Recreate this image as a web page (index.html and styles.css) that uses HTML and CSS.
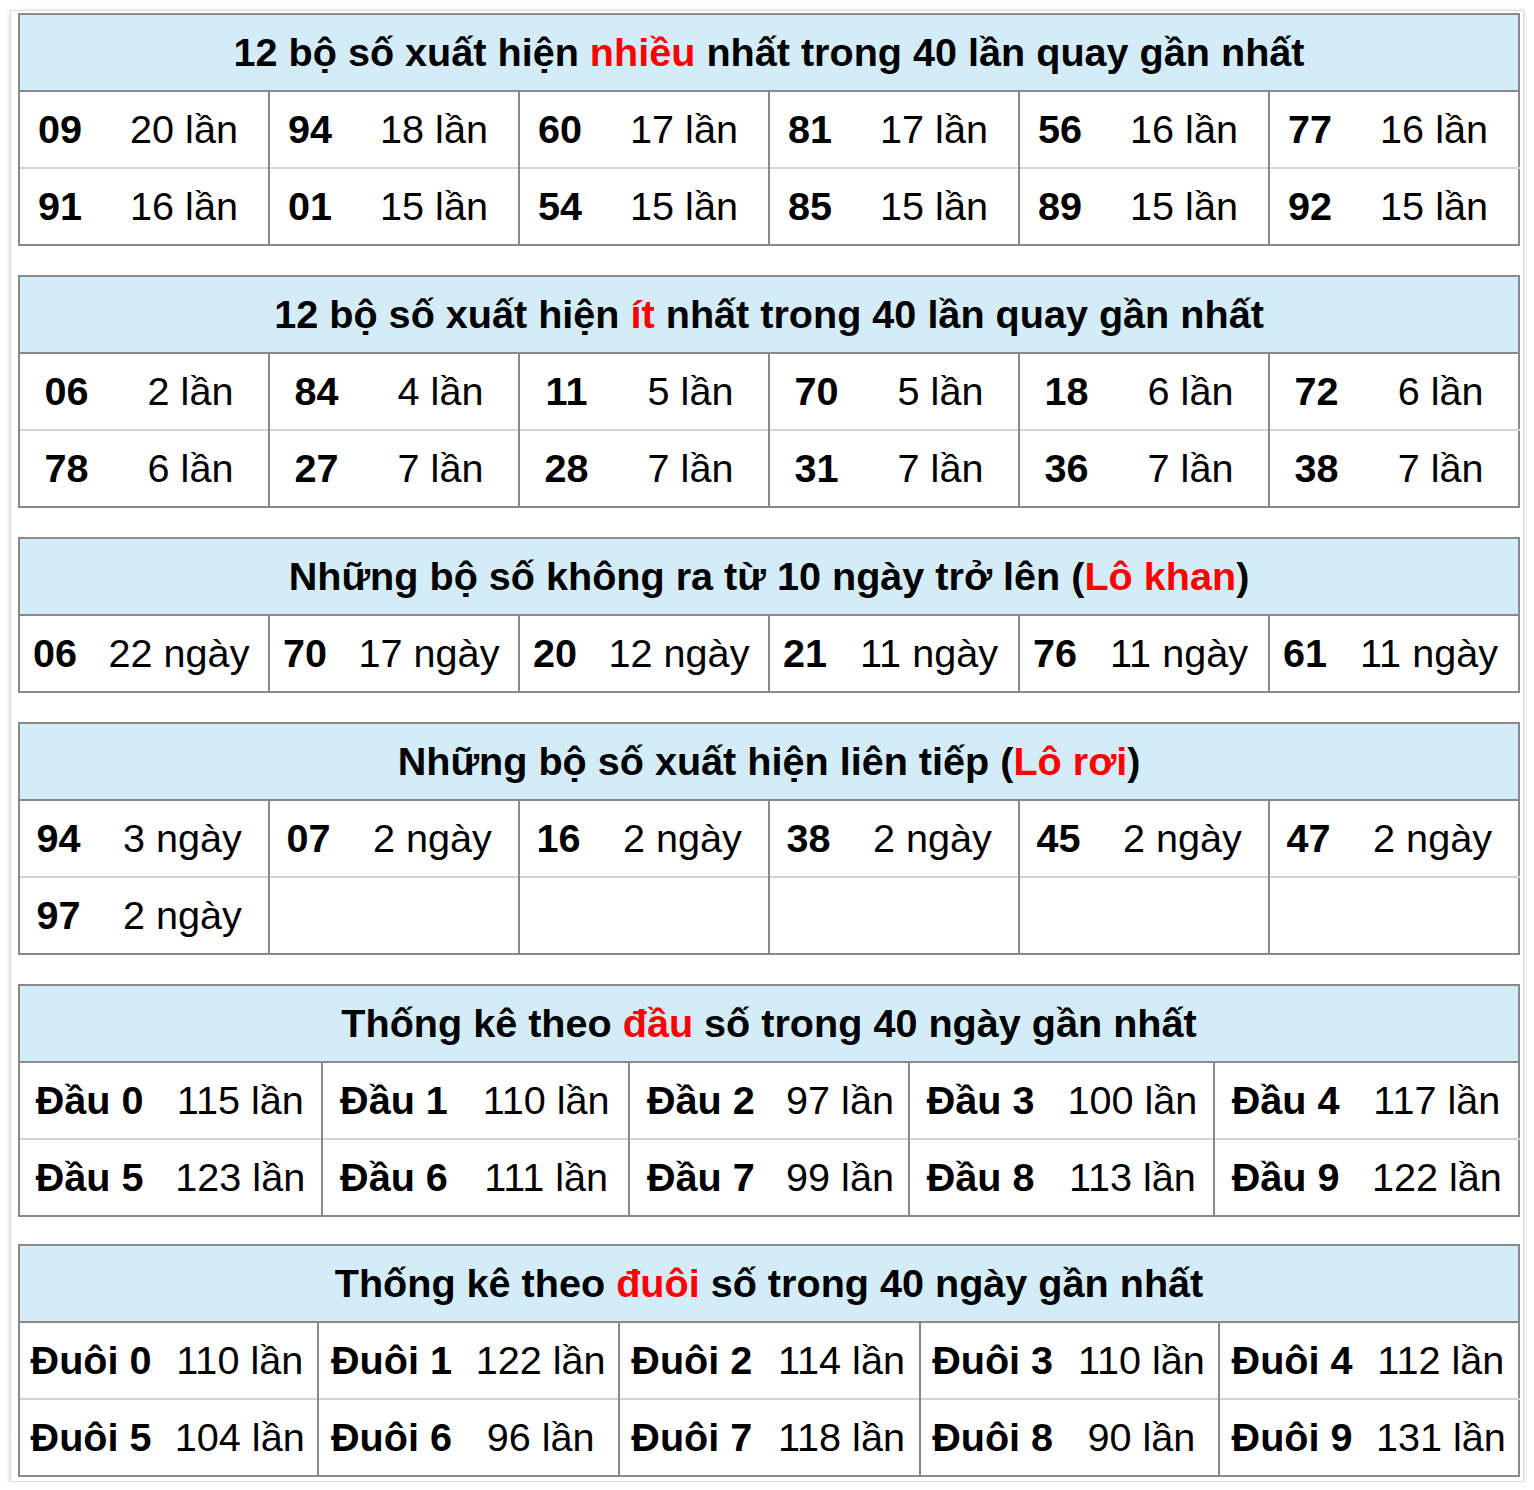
FILE: index.html
```html
<!DOCTYPE html>
<html lang="vi">
<head>
<meta charset="utf-8">
<title>Thống kê lô tô</title>
<link rel="stylesheet" href="styles.css">
</head>
<body>
<div class="card">

<table class="stat">
  <colgroup>
    <col class="w81"><col class="w169"><col class="w81"><col class="w169"><col class="w81"><col class="w169">
    <col class="w81"><col class="w169"><col class="w81"><col class="w169"><col class="w81"><col class="w169">
  </colgroup>
  <tr><th colspan="12">12 bộ số xuất hiện <span class="red">nhiều</span> nhất trong 40 lần quay gần nhất</th></tr>
  <tr>
    <td class="n">09</td><td>20 lần</td>
    <td class="n">94</td><td>18 lần</td>
    <td class="n">60</td><td>17 lần</td>
    <td class="n">81</td><td>17 lần</td>
    <td class="n">56</td><td>16 lần</td>
    <td class="n">77</td><td>16 lần</td>
  </tr>
  <tr>
    <td class="n">91</td><td>16 lần</td>
    <td class="n">01</td><td>15 lần</td>
    <td class="n">54</td><td>15 lần</td>
    <td class="n">85</td><td>15 lần</td>
    <td class="n">89</td><td>15 lần</td>
    <td class="n">92</td><td>15 lần</td>
  </tr>
</table>

<table class="stat">
  <colgroup>
    <col class="w94"><col class="w156"><col class="w94"><col class="w156"><col class="w94"><col class="w156">
    <col class="w94"><col class="w156"><col class="w94"><col class="w156"><col class="w94"><col class="w156">
  </colgroup>
  <tr><th colspan="12">12 bộ số xuất hiện <span class="red">ít</span> nhất trong 40 lần quay gần nhất</th></tr>
  <tr>
    <td class="n">06</td><td>2 lần</td>
    <td class="n">84</td><td>4 lần</td>
    <td class="n">11</td><td>5 lần</td>
    <td class="n">70</td><td>5 lần</td>
    <td class="n">18</td><td>6 lần</td>
    <td class="n">72</td><td>6 lần</td>
  </tr>
  <tr>
    <td class="n">78</td><td>6 lần</td>
    <td class="n">27</td><td>7 lần</td>
    <td class="n">28</td><td>7 lần</td>
    <td class="n">31</td><td>7 lần</td>
    <td class="n">36</td><td>7 lần</td>
    <td class="n">38</td><td>7 lần</td>
  </tr>
</table>

<table class="stat">
  <colgroup>
    <col class="w71"><col class="w179"><col class="w71"><col class="w179"><col class="w71"><col class="w179">
    <col class="w71"><col class="w179"><col class="w71"><col class="w179"><col class="w71"><col class="w179">
  </colgroup>
  <tr><th colspan="12">Những bộ số không ra từ 10 ngày trở lên (<span class="red">Lô khan</span>)</th></tr>
  <tr>
    <td class="n">06</td><td>22 ngày</td>
    <td class="n">70</td><td>17 ngày</td>
    <td class="n">20</td><td>12 ngày</td>
    <td class="n">21</td><td>11 ngày</td>
    <td class="n">76</td><td>11 ngày</td>
    <td class="n">61</td><td>11 ngày</td>
  </tr>
</table>

<table class="stat">
  <colgroup>
    <col class="w78"><col class="w172"><col class="w78"><col class="w172"><col class="w78"><col class="w172">
    <col class="w78"><col class="w172"><col class="w78"><col class="w172"><col class="w78"><col class="w172">
  </colgroup>
  <tr><th colspan="12">Những bộ số xuất hiện liên tiếp (<span class="red">Lô rơi</span>)</th></tr>
  <tr>
    <td class="n">94</td><td>3 ngày</td>
    <td class="n">07</td><td>2 ngày</td>
    <td class="n">16</td><td>2 ngày</td>
    <td class="n">38</td><td>2 ngày</td>
    <td class="n">45</td><td>2 ngày</td>
    <td class="n">47</td><td>2 ngày</td>
  </tr>
  <tr>
    <td class="n">97</td><td>2 ngày</td>
    <td class="n"></td><td></td>
    <td class="n"></td><td></td>
    <td class="n"></td><td></td>
    <td class="n"></td><td></td>
    <td class="n"></td><td></td>
  </tr>
</table>

<table class="stat tight">
  <colgroup>
    <col class="w140"><col class="w163"><col class="w142"><col class="w164"><col class="w143"><col class="w137">
    <col class="w142"><col class="w163"><col class="w141"><col class="w163">
  </colgroup>
  <tr><th colspan="10">Thống kê theo <span class="red">đầu</span> số trong 40 ngày gần nhất</th></tr>
  <tr>
    <td class="n">Đầu 0</td><td>115 lần</td>
    <td class="n">Đầu 1</td><td>110 lần</td>
    <td class="n">Đầu 2</td><td>97 lần</td>
    <td class="n">Đầu 3</td><td>100 lần</td>
    <td class="n">Đầu 4</td><td>117 lần</td>
  </tr>
  <tr>
    <td class="n">Đầu 5</td><td>123 lần</td>
    <td class="n">Đầu 6</td><td>111 lần</td>
    <td class="n">Đầu 7</td><td>99 lần</td>
    <td class="n">Đầu 8</td><td>113 lần</td>
    <td class="n">Đầu 9</td><td>122 lần</td>
  </tr>
</table>

<table class="stat last">
  <colgroup>
    <col class="w143"><col class="w156"><col class="w145"><col class="w155"><col class="w145"><col class="w156">
    <col class="w144"><col class="w155"><col class="w144"><col class="w155">
  </colgroup>
  <tr><th colspan="10">Thống kê theo <span class="red">đuôi</span> số trong 40 ngày gần nhất</th></tr>
  <tr>
    <td class="n">Đuôi 0</td><td>110 lần</td>
    <td class="n">Đuôi 1</td><td>122 lần</td>
    <td class="n">Đuôi 2</td><td>114 lần</td>
    <td class="n">Đuôi 3</td><td>110 lần</td>
    <td class="n">Đuôi 4</td><td>112 lần</td>
  </tr>
  <tr>
    <td class="n">Đuôi 5</td><td>104 lần</td>
    <td class="n">Đuôi 6</td><td>96 lần</td>
    <td class="n">Đuôi 7</td><td>118 lần</td>
    <td class="n">Đuôi 8</td><td>90 lần</td>
    <td class="n">Đuôi 9</td><td>131 lần</td>
  </tr>
</table>

</div>
</body>
</html>
```

FILE: styles.css
```css
html, body {
  margin: 0;
  padding: 0;
  background: #ffffff;
}

body {
  font-family: "Liberation Sans", Arial, Helvetica, sans-serif;
  color: #000;
}

.card {
  box-sizing: border-box;
  margin: 10px 0 0 10px;
  width: 1514px;
  padding: 2px 3px 4px 7px;
  border: 1px solid #dcdcdc;
  background: #fff;
  box-shadow: 0 1px 4px rgba(0, 0, 0, 0.18);
}

.stat {
  width: 1502px;
  table-layout: fixed;
  border-collapse: collapse;
  border: 2px solid #898989;
  margin: 0 0 29px 0;
  font-size: 39.6px;
  line-height: 1;
}

.stat.tight {
  margin-bottom: 27px;
}

.stat.last {
  margin-bottom: 0;
}

.stat th {
  height: 75px;
  padding: 0;
  background: #d4ecf7;
  font-weight: bold;
  text-align: center;
  border-bottom: 2px solid #898989;
  white-space: nowrap;
}

.stat td {
  height: 75px;
  padding: 0;
  text-align: center;
  vertical-align: middle;
  border-top: 2px solid #d3d3d3;
  white-space: nowrap;
}

.stat tr:nth-child(2) td {
  border-top: 2px solid #898989;
}

.stat td.n {
  font-weight: bold;
  border-left: 2px solid #898989;
}

.red {
  color: #ff0000;
}

.w71 { width: 71px; }
.w78 { width: 78px; }
.w81 { width: 81px; }
.w94 { width: 94px; }
.w137 { width: 137px; }
.w140 { width: 140px; }
.w141 { width: 141px; }
.w142 { width: 142px; }
.w143 { width: 143px; }
.w144 { width: 144px; }
.w145 { width: 145px; }
.w155 { width: 155px; }
.w156 { width: 156px; }
.w163 { width: 163px; }
.w164 { width: 164px; }
.w169 { width: 169px; }
.w172 { width: 172px; }
.w179 { width: 179px; }
```
